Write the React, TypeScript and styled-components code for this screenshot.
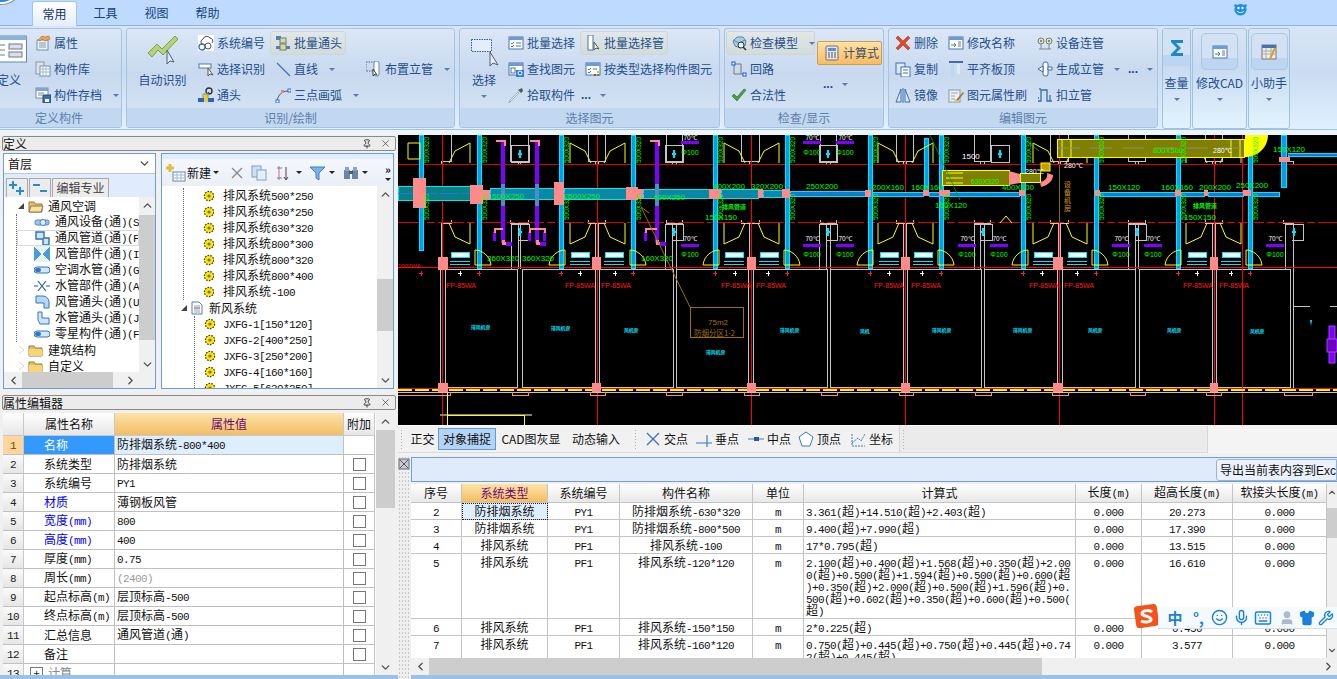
import React from "react";
import styled, { createGlobalStyle } from "styled-components";
import { Smile, Mic, Keyboard, Shirt, Wrench, User, Pin, X, ChevronUp, ChevronDown, ChevronLeft, ChevronRight } from "lucide-react";

const Global = createGlobalStyle`
  html, body { margin: 0; padding: 0; background: #f0f0f0; overflow: hidden; }
  * { box-sizing: border-box; }
  body { font-family: "Noto Sans CJK SC", "Liberation Sans", sans-serif; font-size: 12px; }
`;

const Page = styled.div`
  position: relative; width: 1337px; height: 679px; overflow: hidden;
  display: flex; flex-direction: column; background: #f0f0f0; line-height: 1;
`;

/* ---------- title bar and ribbon ---------- */
const TitleBar = styled.div`
  position: relative; height: 26px; flex: none; display: flex; align-items: flex-end; padding-left: 29px;
  background: #bedafe; border-bottom: 1px solid #8fb3e2;
`;
const Orb = styled.div`
  position: absolute; left: -20px; top: -36px; width: 42px; height: 40px; border-radius: 50%;
  background: #2f86d8; border: 2px solid #ffffff; box-shadow: 0 0 0 1px #7d97b8;
`;
const Tab = styled.div<{ $on?: boolean }>`
  width: 51px; height: 25px; display: flex; align-items: center; justify-content: center; color: #17417f; font-size: 12px;
  ${p => p.$on && `margin: 0 3px; width: 45px; border: 1px solid #a5c4e8; border-bottom: none; border-radius: 3px 3px 0 0;
    background: linear-gradient(#ffffff, #e3eefb); position: relative; top: 1px; color:#15325f;`}
`;
const TabSpacer = styled.div`flex: 1;`;
const Mascot = styled.div`margin: 0 89px 8px 0; width: 15px; height: 16px;`;

const Ribbon = styled.div`
  height: 104px; flex: none; display: flex; gap: 4px; padding-top: 2px; overflow: hidden;
  background: linear-gradient(#d8e5f6, #cadcf2 45%, #dff0ff);
  border-bottom: 1px solid #9cc2e6;
`;
const Group = styled.div<{ $w: number; $first?: boolean }>`
  width: ${p => p.$w}px; flex: none; height: 100px; display: flex; flex-direction: column;
  border: 1px solid #a8c3e0; border-radius: 3px; overflow: hidden;
  ${p => p.$first && `margin-left: -4px;`}
  background: linear-gradient(#dbe7f7, #c8d9ef 45%, #d8e6f6);
`;
const GroupBody = styled.div`height: 79px; flex: none; display: flex; padding-top: 1px;`;
const GroupFoot = styled.div`
  flex: 1; display: flex; align-items: center; justify-content: center; color: #5c7fac; background: #c2d7f0;
`;
const Col = styled.div<{ $w: number; $ml?: number; $pt?: number }>`
  width: ${p => p.$w}px; flex: none; display: flex; flex-direction: column;
  margin-left: ${p => p.$ml ?? 0}px; padding-top: ${p => p.$pt ?? 0}px;
`;
const BigBtn = styled.div<{ $w: number; $ml?: number }>`
  width: ${p => p.$w}px; flex: none; margin-left: ${p => p.$ml ?? 0}px; display: flex; flex-direction: column; align-items: center;
  color: #244f8c; white-space: nowrap;
`;
const BigIcon = styled.div<{ $h: number }>`height: ${p => p.$h}px; display: flex; align-items: center; justify-content: center;`;
const BigLabel = styled.div<{ $mt: number; $mb?: number }>`margin-top: ${p => p.$mt}px; margin-bottom: ${p => p.$mb ?? 0}px;`;
const Item = styled.div<{ $hot?: boolean; $gap?: number }>`
  height: 24px; margin: 1px 0; display: flex; align-items: center; gap: ${p => p.$gap ?? 3}px; color: #244f8c; white-space: nowrap;
  ${p => p.$hot && `margin-left: -5px; padding-left: 4px; border-radius: 3px; border: 1px solid #cdd5d8;
    background: linear-gradient(#e2e7e8, #d3dcd9);`}
`;
const Calc = styled.div`
  width: 65px; height: 24px; display: flex; align-items: center; gap: 3px; padding-left: 6px; color: #3a4f6e;
  border: 1px solid #c79f55; border-radius: 2px; background: linear-gradient(#fde3a4, #fbbb62);
`;
const Caret = styled.span<{ $ml?: number; $block?: boolean }>`
  display: inline-block; width: 0; height: 0; margin-left: ${p => p.$ml ?? 6}px;
  border-top: 3px solid #5b7dab; border-left: 3px solid transparent; border-right: 3px solid transparent;
  ${p => p.$block && `margin: 0;`}
`;
const Dots = styled.span`color: #244f8c; font-family: "Liberation Sans", sans-serif; font-weight: bold; letter-spacing: 0;`;
const Mini = styled.div<{ $w: number; $ml?: number }>`
  width: ${p => p.$w}px; flex: none; height: 101px; display: flex; flex-direction: column; align-items: center;
  margin-left: ${p => p.$ml ?? 0}px;
  border: 1px solid #9cc5dc; border-radius: 3px; color: #244f8c; white-space: nowrap;
  background: linear-gradient(#d7e4f5, #c9dbf1 40%, #e2f3ff);
`;
const MiniBox = styled.div<{ $w: number; $flat?: boolean }>`
  width: ${p => p.$w}px; height: 37px; margin-top: ${p => (p.$flat ? 0 : 4)}px; flex: none; display: flex; align-items: center; justify-content: center;
  border-radius: ${p => (p.$flat ? 0 : 5)}px; ${p => !p.$flat && `border: 1px solid #aac7e3;`}
  background: linear-gradient(#d2e1f4 70%, #bdd5f0 70%);
`;
const MiniLabel = styled.div<{ $mt: number }>`margin-top: ${p => p.$mt}px; height: 14px; margin-bottom: 7px; font-size: 12px;`;

/* ---------- body ---------- */
const Strip = styled.div`height: 5px; flex: none; background: #eef4fb;`;
const Main = styled.div`flex: 1; display: flex; min-height: 0;`;
const LeftCol = styled.div`width: 398px; flex: none; display: flex; flex-direction: column; background: #f0f0f0;`;
const RightCol = styled.div`flex: 1; min-width: 0; display: flex; flex-direction: column;`;

const DockTitle = styled.div<{ $mt: number }>`
  height: 15px; margin: ${p => p.$mt}px 2px 0 2px; flex: none; display: flex; align-items: center; padding: 0 4px 0 0;
  background: #ececec; border: 1px solid #8a8a8a; border-radius: 2px; color: #111; font-size: 12px;
`;
const DockName = styled.span`flex: 1;`;
const DockIcons = styled.span`display: flex; gap: 8px; align-items: center; color: #333;`;

const Panes = styled.div`height: 236px; margin: 2px 3px 0 3px; flex: none; display: flex; gap: 5px;`;
const Pane = styled.div<{ $w: number }>`
  width: ${p => p.$w}px; flex: none; display: flex; flex-direction: column; border: 1px solid #6b9fd3; background: #e0ecfd;
`;
const Combo = styled.div`
  height: 20px; margin: 0; flex: none; display: flex; align-items: center; justify-content: space-between; padding: 0 4px;
  background: #fff; border-bottom: 1px solid #b8c8dc; color: #111;
`;
const AddBar = styled.div`height: 23px; flex: none; display: flex; align-items: flex-end; gap: 1px; padding-left: 2px;`;
const AddBtn = styled.div<{ $w: number }>`
  width: ${p => p.$w}px; height: 19px; display: flex; align-items: center; justify-content: center;
  background: #ececec; border: 1px solid #aaa; border-bottom: none; color: #444;
`;
const TreeWrap = styled.div`flex: 1; min-height: 0; display: flex; background: #fff;`;
const TreeBody = styled.div<{ $pt: number }>`flex: 1; min-width: 0; overflow: hidden; position: relative; padding-top: ${p => p.$pt}px;`;
const TreeRow = styled.div<{ $pl: number; $gap?: number; $sel?: boolean }>`
  height: 16px; display: flex; align-items: center; gap: ${p => p.$gap ?? 5}px; padding-left: ${p => p.$pl}px;
  white-space: nowrap; color: #111; font-size: 12px;
  ${p => p.$sel && `outline: 1px solid #dadada; outline-offset: -1px;`}
`;
const Branch = styled.div<{ $ml: number }>`margin-left: ${p => p.$ml}px; border-left: 1px dotted #666;`;
const TriOpen = styled.span`
  width: 0; height: 0; flex: none; border-bottom: 6px solid #444; border-left: 6px solid transparent;
`;
const TriClosed = styled.span`
  width: 0; height: 0; flex: none; border-top: 4px solid transparent; border-bottom: 4px solid transparent; border-left: 5px solid #fff;
  filter: drop-shadow(0 0 0.6px #555);
`;
const ToolStrip = styled.div`
  height: 27px; margin-top: 5px; flex: none; display: flex; align-items: center; padding-left: 4px; color: #111;
  background: linear-gradient(#f4f7fc, #ebeff6);
`;
const ToolBtn = styled.div<{ $w: number; $ml?: number }>`width: ${p => p.$w}px; margin-left: ${p => p.$ml ?? 0}px; flex: none; display: flex; align-items: center; gap: 2px;`;
const ToolCaret = styled.span`
  width: 0; height: 0; border-top: 3px solid #222; border-left: 3px solid transparent; border-right: 3px solid transparent;
`;
const More = styled.div`margin-left: auto; margin-right: 2px; font-size: 11px; font-weight: bold; display: flex; flex-direction: column; align-items: center; gap: 3px;`;
const DocName = styled.span`margin-left: 2px;`;

const Lat = styled.span`font-family: "Liberation Mono", monospace; font-size: 11px; letter-spacing: -0.6px;`;
const Mixed = ({ t }: { t: string }) => (
  <>{t.split(/([\x00-\x7f]+)/).map((p, i) => (/^[\x00-\x7f]+$/.test(p) ? <Lat key={i}>{p}</Lat> : p))}</>
);

/* ---------- scrollbars ---------- */
const VBar = styled.div<{ $w: number }>`
  width: ${p => p.$w}px; flex: none; display: flex; flex-direction: column; align-items: center; background: #f0f0f0; color: #555;
`;
const VSpace = styled.div<{ $h?: number }>`flex: ${p => (p.$h === undefined ? 1 : "none")}; height: ${p => p.$h ?? 0}px;`;
const VThumb = styled.div<{ $h: number }>`width: 100%; height: ${p => p.$h}px; flex: none; background: #cdcdcd;`;
const ArrowCell = styled.div`height: 16px; width: 100%; flex: none; display: flex; align-items: center; justify-content: center;`;
const HBar = styled.div<{ $h: number }>`
  height: ${p => p.$h}px; flex: none; display: flex; align-items: center; background: #f0f0f0; color: #555;
`;
const HThumb = styled.div<{ $w: number }>`width: ${p => p.$w}px; height: 100%; flex: none; background: #cdcdcd;`;
const HArrow = styled.div`width: 18px; height: 100%; flex: none; display: flex; align-items: center; justify-content: center;`;
const HCorner = styled.div`width: 16px; height: 100%; flex: none;`;
const Grow = styled.div`flex: 1;`;

/* ---------- property table ---------- */
const PropWrap = styled.div`flex: 1; min-height: 0; margin: 3px 3px 0 3px; display: flex; overflow: hidden; background: #fff;`;
const PropClip = styled.div`flex: 1; min-width: 0; overflow: hidden;`;
const PropTable = styled.table`border-collapse: separate; border-spacing: 0; table-layout: fixed; width: 372px;`;
const PH = styled.th<{ $hot?: boolean; $w: number }>`
  width: ${p => p.$w}px; height: 23px; padding: 0; font-weight: normal; font-size: 12px; text-align: center;
  border-right: 1px solid #c8c8c8; border-bottom: 1px solid #c8c8c8; color: #111;
  background: ${p => (p.$hot ? "linear-gradient(#fde3a8, #f3bd64)" : "linear-gradient(#ffffff, #e6e6e6)")};
  ${p => p.$hot && `color: #6b0a78;`}
`;
const Num = styled.td<{ $on?: boolean }>`
  height: 19px; padding: 0; text-align: center; border-right: 1px solid #c8c8c8; border-bottom: 1px solid #c0c0c0;
  background: ${p => (p.$on ? "#fcd69c" : "linear-gradient(#fafafa, #e6e6e6)")}; color: ${p => (p.$on ? "#8a3a00" : "#222")};
`;
const PName = styled.td<{ $blue?: boolean; $on?: boolean; $gray?: boolean }>`
  height: 19px; padding: 0 0 0 20px; white-space: nowrap; overflow: hidden; border-right: 1px solid #c0c0c0; border-bottom: 1px solid #c0c0c0;
  color: ${p => (p.$on ? "#fff" : p.$blue ? "#0000ff" : p.$gray ? "#888" : "#111")};
  background: ${p => (p.$on ? "#3399ff" : "#fff")};
`;
const PVal = styled.td<{ $on?: boolean; $gray?: boolean }>`
  height: 19px; padding: 0 0 0 2px; white-space: nowrap; overflow: hidden; border-right: 1px solid #c0c0c0; border-bottom: 1px solid #c0c0c0;
  color: ${p => (p.$gray ? "#999" : "#111")}; background: ${p => (p.$on ? "#ddeeff" : "#fff")};
`;
const PChk = styled.td`
  height: 19px; padding: 0; border-right: 1px solid #c0c0c0; border-bottom: 1px solid #c0c0c0; background: #fff; text-align: center;
`;
const Check = styled.span`display: inline-block; width: 13px; height: 13px; border: 1px solid #777; vertical-align: middle; background: #fff;`;
const PlusBox = styled.span`
  display: inline-flex; width: 13px; height: 12px; margin: 0 5px 0 -14px; border: 1px solid #777; align-items: center; justify-content: center; font-size: 11px; color: #222;
`;
const Foot = styled.div`height: 4px; flex: none; background: #9cc0e8;`;

/* ---------- canvas and snap bar ---------- */
const Canvas = styled.svg`display: block; width: 939px; height: 290px; flex: none; background: #000;`;
const CadT = styled.text`font-family: "Liberation Sans", sans-serif;`;
const CadH = styled.text<{ $thin?: boolean }>`font-family: "Noto Sans CJK SC", sans-serif; font-weight: ${p => (p.$thin ? 400 : 700)};`;
const SnapBar = styled.div`height: 28px; flex: none; display: flex; align-items: stretch; background: #f4f4f4;`;
const SnapSec = styled.div<{ $w: number; $dark?: boolean }>`
  width: ${p => p.$w}px; flex: none; display: flex; align-items: center; background: ${p => (p.$dark ? "#ebebeb" : "#f1f1f1")};
  border-bottom: 1px solid #dcdcdc; border-right: 1px solid #d6d6d6; border-top: 1px solid #fafafa;
`;
const GripV = styled.div<{ $mr: number; $ml?: number }>`
  width: 3px; height: 20px; flex: none; margin: 0 ${p => p.$mr}px 0 ${p => p.$ml ?? 2}px;
  background-image: radial-gradient(#b0b0b0 0.8px, transparent 0.9px); background-size: 3px 3px;
`;
const SnapBtn = styled.div<{ $w: number; $on?: boolean }>`
  width: ${p => p.$w}px; height: 22px; flex: none; display: flex; align-items: center; justify-content: center; color: #111; white-space: nowrap;
  ${p => p.$on && `margin-left: 1px; background: #b3d4f5; border: 1px solid #5b9cdc;`}
`;
const SnapIcon = styled.div<{ $w: number }>`width: ${p => p.$w}px; flex: none; display: flex; align-items: center; gap: 3px; color: #111; white-space: nowrap;`;

/* ---------- bottom table ---------- */
const Bottom = styled.div`flex: 1; min-height: 0; margin-top: 4px; display: flex;`;
const BottomGrip = styled.div`
  width: 13px; flex: none; padding-top: 1px; background-color: #efefef;
  background-image: radial-gradient(#c8c8c8 0.9px, transparent 1px); background-size: 3px 4px; background-position: 3px 18px;
`;
const BottomMain = styled.div`flex: 1; min-width: 0; display: flex; flex-direction: column;`;
const BlueBar = styled.div`
  height: 25px; flex: none; display: flex; justify-content: flex-end; overflow: hidden;
  background: #dfeafb; border: 1px solid #6f9fd8; border-width: 1px 0 1px 1px;
`;
const ExportBtn = styled.div`
  width: 121px; flex: none; height: 22px; margin-top: 1px; padding-left: 3px; display: flex; align-items: center; white-space: nowrap; overflow: hidden;
  background: #eaf1fc; border: 1px solid #93b5dd; border-radius: 3px 0 0 3px; color: #111;
`;
const ExportLatin = styled.span`font-family: "Liberation Sans", sans-serif;`;
const GridZone = styled.div`height: 174px; margin-top: 2px; flex: none; display: flex;`;
const GridClip = styled.div`width: 916px; flex: none; overflow: hidden; background: #fff;`;
const Grid = styled.table`border-collapse: separate; border-spacing: 0; table-layout: fixed; width: 916px;`;
const GH = styled.th<{ $hot?: boolean; $w: number }>`
  width: ${p => p.$w}px; height: 19px; padding: 0; font-weight: normal; font-size: 12px; text-align: center; white-space: nowrap;
  line-height: 12px;
  border-right: 1px solid #c4c4c4; border-bottom: 1px solid #c4c4c4; color: ${p => (p.$hot ? "#6b0a78" : "#111")};
  background: ${p => (p.$hot ? "linear-gradient(#fde3a8, #f3bd64)" : "linear-gradient(#ffffff, #e8e8e8)")};
`;
const GD = styled.td<{ $left?: boolean; $sel?: boolean }>`
  padding: 2px ${p => (p.$left ? "0 0 2px" : "0 0")}; vertical-align: top; white-space: nowrap; overflow: hidden;
  border-right: 1px solid #c4c4c4; border-bottom: 1px solid #c4c4c4; color: #111; line-height: 12px;
  text-align: ${p => (p.$left ? "left" : "center")};
  ${p => p.$sel && `background: #ddeeff; outline: 1px dotted #222; outline-offset: -1px;`}
`;
const CellBox = styled.div<{ $h: number }>`height: ${p => p.$h - 3}px; overflow: hidden;`;
const Line = styled.div`height: 12px;`;
const Sogou = styled.div`position: absolute; left: 1134px; top: 603px; width: 203px; height: 26px; display: flex; align-items: center;`;
const SogouBar = styled.div`
  position: absolute; left: 24px; top: 4px; right: 0; height: 22px; display: flex; align-items: center; gap: 0; padding-left: 2px;
  background: rgba(245, 250, 255, 0.96); border-bottom: 1px solid #d5e0ea; color: #1a80d8;
`;
const SogouChar = styled.span<{ $w: number }>`width: ${p => p.$w}px; flex: none; text-align: center; font-weight: bold; font-size: 15px;`;
const SogouIcon = styled.span<{ $w: number; $muted?: boolean }>`width: ${p => p.$w}px; flex: none; display: flex; justify-content: center; color: ${p => (p.$muted ? "#a9bccd" : "#1a80d8")};`;

/* ---------- icons ---------- */
const S = ({ children, w = 16, h = 16 }: { children: React.ReactNode; w?: number; h?: number }) => (
  <svg width={w} height={h} viewBox={`0 0 ${w} ${h}`} style={{ flex: "none", display: "block" }}>{children}</svg>
);
const win = (
  <>
    <rect x="1" y="2" width="14" height="12" fill="#fff" stroke="#4a74a8" />
    <rect x="1" y="2" width="14" height="3" fill="#6f9bd0" />
  </>
);
const icons: Record<string, React.ReactNode> = {
  attr: <><rect x="2" y="5" width="11" height="10" fill="#eef3f8" stroke="#6e8fb5" /><path d="M4 8h7M4 10h7M4 12h7" stroke="#7f97b5" /><path d="M3 5l4-4 3 1 4-1 1 3-5 2-3-2-2 2z" fill="#e8a64e" stroke="#a86c2a" strokeWidth=".6" /></>,
  lib: <><rect x="1" y="1" width="8" height="12" fill="#dfe3e8" stroke="#8a99aa" /><rect x="5" y="5" width="10" height="10" fill="#fff" stroke="#6e8fb5" /><path d="M5 8h10M5 11h10M8 5v10M11 5v10" stroke="#9fb8d5" /></>,
  store: <><rect x="1" y="1" width="12" height="10" fill="#fff" stroke="#7d8a99" /><rect x="1" y="1" width="12" height="3" fill="#7fa5d2" /><path d="M3 6h6M3 8h4" stroke="#7d8a99" /><rect x="8" y="8" width="8" height="8" fill="#3c6fb0" stroke="#1f4a85" /><rect x="10" y="12" width="4" height="3" fill="#fff" /></>,
  sysno: <><rect x="0" y="0" width="16" height="16" fill="#fff" /><path d="M4 9a3 3 0 0 1 1-5 4 4 0 0 1 7-1 3 3 0 0 1 2 5" fill="none" stroke="#445" /><circle cx="4" cy="12" r="3" fill="none" stroke="#3a6ea5" strokeWidth="1.3" /><circle cx="10" cy="11" r="3" fill="none" stroke="#555" /></>,
  tee: <><rect x="1" y="1" width="5" height="4" fill="#4f81bd" /><rect x="5" y="3" width="6" height="5" fill="#f4d36a" stroke="#4f81bd" /><rect x="5" y="9" width="6" height="6" fill="#f4d36a" stroke="#4f81bd" /><rect x="1" y="11" width="4" height="3" fill="#4f81bd" /><rect x="11" y="11" width="4" height="3" fill="#4f81bd" /></>,
  pick: <><rect x="1" y="3" width="12" height="4" fill="#fff" stroke="#4c78ad" /><path d="M10 7v8l2-2 3 1-5-7" fill="#fff" stroke="#555" /></>,
  line: <path d="M2 2l13 13" stroke="#3c73b4" strokeWidth="1.3" />,
  riser: <><rect x="0" y="1" width="9" height="9" fill="none" stroke="#4270a8" strokeDasharray="1.5 1" /><rect x="8" y="0" width="5" height="15" rx="2" fill="#fff" stroke="#6a88a8" /><path d="M7 8v7l2-2 2 1z" fill="#fff" stroke="#444" /></>,
  elbow: <><circle cx="11" cy="4" r="3" fill="none" stroke="#333" strokeWidth="1.4" /><path d="M8 8l3-3" stroke="#333" /><rect x="5" y="7" width="5" height="5" fill="#f2c83a" stroke="#7a6" /><rect x="0" y="11" width="16" height="4" fill="#2c62c0" /><rect x="6" y="11" width="4" height="4" fill="#f2c83a" /></>,
  arc: <><path d="M2 14C3 8 7 4 13 4" fill="none" stroke="#555" /><rect x="1" y="13" width="3" height="3" fill="#fff" stroke="#2b6fc0" /><rect x="13" y="2" width="3" height="3" fill="#fff" stroke="#2b6fc0" /><rect x="6" y="3" width="3" height="3" fill="#d88" /></>,
  batchSel: <>{win}<path d="M3 8l1 1 2-2M3 11l1 1 2-2M8 8h5M8 11h5" stroke="#4a74a8" fill="none" /></>,
  pipeSel: <><rect x="3" y="0" width="5" height="15" fill="#fff" stroke="#4a74a8" /><path d="M9 7v8l2-2 3 1z" fill="#fff" stroke="#555" /></>,
  find: <>{win}<rect x="3" y="7" width="4" height="5" fill="none" stroke="#4a74a8" /><rect x="8" y="9" width="8" height="7" fill="#2f7fd6" /><circle cx="12" cy="12" r="2" fill="none" stroke="#fff" /></>,
  typeSel: <>{win}<path d="M3 8l1 1 2-2M3 11l1 1 2-2M8 8h4" stroke="#4a74a8" fill="none" /><rect x="9" y="13" width="2" height="2" fill="#c33" /><rect x="12" y="13" width="2" height="2" fill="#3a3" /><rect x="12" y="10" width="2" height="2" fill="#cc3" /></>,
  drop: <><path d="M11 6L3 14l-2 2 1-3 8-8z" fill="#dff0fa" stroke="#98b4c8" /><path d="M10 3l3 3 2-2-1-3z" fill="#555" /></>,
  check: <><path d="M6 2l6 0 3 4-1 5-5 2-5-2-2-5z" fill="#a9cce8" stroke="#5a84ad" /><path d="M2 5l6 3 6-3M8 8v5" stroke="#5a84ad" fill="none" /><circle cx="10" cy="10" r="3" fill="#e8f3fb" stroke="#333" /><path d="M12 12l3 3" stroke="#333" strokeWidth="1.6" /></>,
  loop: <><path d="M3 3h7v10h3" fill="none" stroke="#777" /><path d="M3 3v10h7" fill="none" stroke="#777" /><rect x="1" y="1" width="3" height="3" fill="#fff" stroke="#1a55e0" /><rect x="12" y="12" width="3" height="3" fill="#fff" stroke="#1a55e0" /></>,
  ok: <path d="M1 9l5 5 9-11-2-1-7 8-3-3z" fill="#4b9e3c" stroke="#2f6f28" strokeWidth=".6" />,
  calc: <><rect x="2" y="1" width="12" height="14" rx="1" fill="#e6e6ea" stroke="#6d6f77" /><rect x="4" y="3" width="8" height="3" fill="#5f8fd0" /><path d="M4 8h2M7 8h2M10 8h2M4 10h2M7 10h2M10 10h2M4 12h2M7 12h2M10 12h2" stroke="#555" strokeWidth="1.2" /></>,
  del: <path d="M1 3l2-2 5 5 5-5 2 2-5 5 5 5-2 2-5-5-5 5-2-2 5-5z" fill="#e2472b" stroke="#a82a17" strokeWidth=".5" />,
  rename: <>{win}<path d="M3 10h5M6 8l2 2-2 2" stroke="#3a7ac0" fill="none" /><path d="M10 7h3M10 9h3M10 11h3" stroke="#777" /></>,
  equip: <><circle cx="4" cy="6" r="3" fill="#f3df9c" stroke="#6c7f92" /><circle cx="12" cy="6" r="3" fill="#f3df9c" stroke="#6c7f92" /><path d="M3 5l2 2M5 5L3 7M11 5l2 2M13 5l-2 2M4 9v5M12 9v5M2 14h12" stroke="#7b8a99" fill="none" /></>,
  copy: <><rect x="1" y="2" width="9" height="11" fill="#dbe9f8" stroke="#3c6fae" /><rect x="6" y="6" width="9" height="10" fill="#fff" stroke="#3c6fae" /><path d="M8 9h5M8 12h5" stroke="#3c6fae" /></>,
  flush: <><rect x="1" y="0" width="14" height="2" fill="#456c9c" /><rect x="3" y="3" width="3" height="13" fill="#bcd7ef" /><rect x="9" y="3" width="3" height="10" fill="#dce9f6" /></>,
  gen: <><rect x="6" y="1" width="5" height="14" rx="2" fill="#fff" stroke="#3a6ea5" /><path d="M6 5L1 8l5 3zM11 6h4v3h-4z" fill="#fff" stroke="#3a6ea5" /></>,
  mirror: <path d="M1 15L6 2v13zM15 15L10 2v13zM8 1v15" fill="#dbe9f8" stroke="#3c6fae" />,
  brush: <><rect x="1" y="3" width="11" height="12" fill="#eef2f6" stroke="#8a97a6" /><path d="M3 6h7M3 9h4M3 12h4" stroke="#98a6b5" /><path d="M8 13l7-8 1 1-6 8z" fill="#a77b2e" /><path d="M7 12l3 3-4 1z" fill="#e0c070" /></>,
  deduct: <path d="M1 14h3V3h6v11h5M1 11h1M3 3V1M13 14V8" fill="none" stroke="#3a6ea5" strokeWidth="1.3" />,
  modCad: <>{win}<path d="M3 10h5M6 8l2 2-2 2" stroke="#3a7ac0" fill="none" /><path d="M10 7h3M10 9h3M10 11h3" stroke="#777" /></>,
  helper: <><rect x="1" y="1" width="14" height="14" fill="#eee" stroke="#777" /><rect x="1" y="1" width="14" height="3" fill="#3f74b5" /><path d="M1 7h14M1 10h14M5 4v11M10 4v11" stroke="#aaa" /><path d="M14 4l-5 11" stroke="#d9a21b" strokeWidth="2" /></>
};
const I = ({ n }: { n: string }) => <S>{icons[n]}</S>;

const Gear = () => (
  <S w={14} h={14}>
    <circle cx="7" cy="7" r="4.6" fill="#f8f000" stroke="#333" strokeWidth="1.2" strokeDasharray="1.6 1.2" />
    <circle cx="7" cy="7" r="3.2" fill="#ffe400" />
    <circle cx="7" cy="7" r="1.6" fill="#8a6a10" />
  </S>
);
const Folder = ({ open }: { open?: boolean }) => (
  <S w={16} h={14}>
    <path d="M1 3h5l1 2h7v8H1z" fill="#f2c04a" stroke="#8a7a50" />
    {open ? <path d="M3 7h12l-2 6H1z" fill="#f8e3a0" stroke="#8a7a50" /> : <rect x="1" y="6" width="13" height="7" fill="#f7d576" />}
  </S>
);
const Doc = () => (
  <S w={12} h={14}>
    <path d="M1 1h7l3 3v9H1z" fill="#fff" stroke="#5a7ea8" />
    <path d="M3 5h6M3 7h6M3 9h6M3 11h6" stroke="#8aa6c5" />
    <path d="M3 7h6" stroke="#d06a5a" />
  </S>
);
const treeIcon: Record<string, React.ReactNode> = {
  a: <><rect x="1" y="6" width="14" height="5" rx="2" fill="#9fc6ea" stroke="#4c86c5" /><circle cx="9" cy="8.5" r="3" fill="#dbeeff" stroke="#4c86c5" /></>,
  b: <path d="M2 2h8v6h5v7H9V9H2z" fill="#cfe3f6" stroke="#2f6fb5" strokeWidth="1.4" />,
  c: <><rect x="0" y="0" width="16" height="16" fill="#4a9bdc" /><path d="M0 0l8 8 8-8M0 16l8-8 8 8" fill="#e5f2fc" stroke="#fff" /></>,
  d: <><rect x="0" y="5" width="16" height="6" rx="3" fill="#d2e7f8" stroke="#2f77c0" /><rect x="1" y="6" width="6" height="4" rx="2" fill="#2f77c0" /></>,
  e: <><path d="M4 3l8 10M12 3L4 13M0 8h4M12 8h4" stroke="#1e5ea8" strokeWidth="1.2" /></>,
  f: <path d="M2 2h7a6 6 0 0 1 6 6v6h-5V9H2z" fill="#b7d8f5" stroke="#2f77c0" />,
  g: <path d="M4 2h4v6h7v6H6L4 10z" fill="#cfe6fa" stroke="#2f77c0" />
};
const defTree: [string, string, boolean?][] = [
  ["a", "通风设备(通)(S"], ["b", "通风管道(通)(F", true], ["c", "风管部件(通)(I"], ["d", "空调水管(通)(G"],
  ["e", "水管部件(通)(A"], ["f", "风管通头(通)(U"], ["g", "水管通头(通)(J"], ["d", "零星构件(通)(F"]
];
const smokeRows = ["排风系统500*250","排风系统630*250","排风系统630*320","排风系统800*300","排风系统800*320","排风系统800*400","排风系统-100"];
const freshRows = ["JXFG-1[150*120]","JXFG-2[400*250]","JXFG-3[250*200]","JXFG-4[160*160]","JXFG-5[630*250]"];

const propRows: { n: string; v: string; blue?: boolean; gray?: boolean }[] = [
  { n: "名称", v: "防排烟系统-800*400" }, { n: "系统类型", v: "防排烟系统" }, { n: "系统编号", v: "PY1" },
  { n: "材质", v: "薄钢板风管", blue: true }, { n: "宽度(mm)", v: "800", blue: true }, { n: "高度(mm)", v: "400", blue: true },
  { n: "厚度(mm)", v: "0.75" }, { n: "周长(mm)", v: "(2400)", gray: true }, { n: "起点标高(m)", v: "层顶标高-500" },
  { n: "终点标高(m)", v: "层顶标高-500" }, { n: "汇总信息", v: "通风管道(通)" }, { n: "备注", v: "" }
];

const gridCols: [string, number, boolean?][] = [
  ["序号", 51], ["系统类型", 86, true], ["系统编号", 72], ["构件名称", 133], ["单位", 51],
  ["计算式", 272], ["长度(m)", 66], ["超高长度(m)", 91], ["软接头长度(m)", 94]
];
const gridRows: { h: number; c: string[]; f: string[] }[] = [
  { h: 17, c: ["2","防排烟系统","PY1","防排烟系统-630*320","m","0.000","20.273","0.000"], f: ["3.361(超)+14.510(超)+2.403(超)"] },
  { h: 17, c: ["3","防排烟系统","PY1","防排烟系统-800*500","m","0.000","17.390","0.000"], f: ["9.400(超)+7.990(超)"] },
  { h: 17, c: ["4","排风系统","PF1","排风系统-100","m","0.000","13.515","0.000"], f: ["17*0.795(超)"] },
  { h: 65, c: ["5","排风系统","PF1","排风系统-120*120","m","0.000","16.610","0.000"], f: ["2.100(超)+0.400(超)+1.568(超)+0.350(超)+2.00","0(超)+0.500(超)+1.594(超)+0.500(超)+0.600(超",")+0.350(超)+2.000(超)+0.500(超)+1.596(超)+0.","500(超)+0.602(超)+0.350(超)+0.600(超)+0.500(","超)"] },
  { h: 17, c: ["6","排风系统","PF1","排风系统-150*150","m","0.000","0.450","0.000"], f: ["2*0.225(超)"] },
  { h: 30, c: ["7","排风系统","PF1","排风系统-160*120","m","0.000","3.577","0.000"], f: ["0.750(超)+0.445(超)+0.750(超)+0.445(超)+0.74","2(超)+0.445(超)"] }
];

/* ---------- CAD drawing ---------- */
const PINK = "#ff8a8a", CY = "#00e5ff", GR = "#00ff00", YL = "#ffff00", WALL = "#c4c4c4", PUR = "#8000ff";
const ductsV = [421, 479, 561, 633, 715, 787, 870, 941, 1023, 1096, 1178, 1250];
const rooms = [[445,517],[522,595],[599,673],[676,748],[753,827],[830,903],[907,981],[984,1057],[1062,1135],[1139,1212],[1216,1290]];
const doors: [number, "R" | "L"][] = [[470,"R"],[570,"L"],[625,"R"],[724,"L"],[779,"R"],[878,"L"],[933,"R"],[1033,"L"],[1087,"R"],[1186,"L"],[1241,"R"]];
const grilles = [451,571,605,725,760,880,914,1034,1068,1188,1222];
const fpX = [446,565,601,721,756,874,911,1029,1064,1183,1219];
const whiteDots = [460,580,615,735,768,889,922,1042,1077,1197,1231];
const redV = [442,597,751,905,1059,1214,1242];
const cols = [[438,448],[592,601],[747,756],[901,910],[1053,1063],[1210,1218]];
const brackets = [[512,528],[590,605],[666,682],[744,759],[821,837],[899,913],[975,991],[1052,1068],[1130,1145],[1206,1221],[1284,1312]];
const shaftsLow = [520,674,828,983,1137,1294];
const shaftsHigh = [520,674,828,1000];
const purLow = [681,803,836,958,990,1112,1144,1266];
const purHigh = [681,803,836];
const roomLabels: [number, number, string][] = [[471,329,"排风机房"],[551,330,"排风机房"],[624,332,"风机房"],[706,354,"排风机房"],[780,332,"排风机房"],[860,333,"风机"],[932,332,"排风机房"],[1013,332,"排风机房"],[1088,332,"风机房"],[1167,332,"风机房"],[1250,333,"风机房"]];
const ductH: [number, number, number, number, string][] = [
  [398,470,186,200,"#0a8080"],[490,554,188,199,"#0a8a96"],[564,626,188,199,"#0a8a96"],[643,709,189,198,"#0a8a96"],[721,758,189,198,"#0a8a96"],
  [763,782,190,197,"#0a8a96"],[790,865,191,196,"#0a7fc0"],[868,923,192,196,"#0a7fc0"],[929,1019,192,196,"#0a7fc0"],[1100,1175,192,196,"#0a7fc0"],
  [1181,1204,192,196,"#0a7fc0"],[1208,1243,192,196,"#0a7fc0"],[1251,1279,192,196,"#0a7fc0"],[1288,1337,153,156,"#0a7fc0"]
];
const pinkH: [number, number, number, number][] = [
  [413,426,178,208],[470,483,185,204],[483,490,190,200],[554,564,182,205],[626,638,187,200],[637,643,189,199],[709,721,189,199],[758,763,189,198],
  [782,790,189,198],[865,871,190,197],[923,929,190,196],[939,950,190,196],[1019,1025,190,196],[1095,1100,190,196],[1175,1181,190,196],[1204,1208,190,196],[1243,1251,190,196]
];
const greenLabels: [number, number, string][] = [
  [508,199,"500X250"],[584,199,"500X250"],[669,200,"400X250"],[729,189,"400X200"],[767,189,"320X200"],[822,189,"250X200"],
  [888,190,"200X160"],[927,190,"160X160"],[1018,190,"400X400"],[1124,190,"150X120"],[1177,190,"160X160"],[1215,190,"200X200"],[1252,188,"250X200"],
  [951,208,"150X120"],[721,220,"150X150"],[1289,152,"150X120"],[503,261,"360X320"],[538,261,"360X320"],[657,261,"160X320"],[1200,220,"150X150"]
];

const Cad = () => (
  <Canvas viewBox="398 135 939 290">
    <g shapeRendering="crispEdges">
      {rooms.map(([a, b], i) => <rect key={i} x={a + 0.5} y={269.5} width={b - a} height={118} fill="none" stroke={WALL} />)}
      <path d="M440.5 269V388M1293.5 269V388M1293 306h17M1330 306h7" stroke={WALL} fill="none" />
      {rooms.map(([a, b], i) => (
        <path key={`u${i}`} fill="none" stroke={WALL}
          d={`M${a - 3.5} 269V223.5H${a + 6.5}V219.5M${b + 3.5} 269V223.5H${b - 6.5}V219.5M${a - 3.5} 164.5V161.5H${a + 6.5}V135M${b + 3.5} 164.5V161.5H${b - 6.5}V135`} />
      ))}
      {shaftsLow.map((x, i) => (
        <g key={i}>
          <path d={`M${x - 8.5} 269V224.5H${x + 9.5}V240.5H${x - 2}`} fill="none" stroke={WALL} />
          <path d={`M${x} 228v8M${x - 2} 232h4`} stroke={CY} strokeWidth="2" />
        </g>
      ))}
      {shaftsHigh.map((x, i) => (
        <g key={i}>
          <rect x={x - 8.5} y={145.5} width={18} height={17} fill="none" stroke={WALL} />
          <path d={`M${x} 150v8M${x - 2} 154h4`} stroke={CY} strokeWidth="2" />
        </g>
      ))}
      {redV.map(x => <line key={x} x1={x + 0.5} x2={x + 0.5} y1={135} y2={425} stroke="#ff0000" />)}
      <line x1={398} x2={1337} y1={164.5} y2={164.5} stroke="#e00000" />
      <line x1={398} x2={1337} y1={222.5} y2={222.5} stroke="#e00000" strokeDasharray="26 3 8 3" />
      <line x1={398} x2={1337} y1={267.5} y2={267.5} stroke="#ff0000" />
      <line x1={1059.5} x2={1059.5} y1={165} y2={222} stroke="#807000" />
      <line x1={398} x2={1337} y1={388.5} y2={388.5} stroke="#ff0000" />
      <line x1={398} x2={1337} y1={390} y2={390} stroke={YL} strokeWidth="2" strokeDasharray="14 3" />
      <line x1={398} x2={1337} y1={392.5} y2={392.5} stroke={WALL} />
      <path d="M398 395.5H450V392" stroke={PINK} fill="none" strokeWidth="1" />
      {brackets.map(([a, b], i) => <path key={i} d={`M${a}.5 392V395.5H${b}.5V392`} stroke={PINK} fill="none" />)}
      {cols.map(([a, b], i) => (
        <g key={i}>
          <rect x={a} y={257} width={b - a} height={13} fill={PINK} />
          <rect x={a} y={383} width={b - a} height={9} fill={PINK} />
        </g>
      ))}
      <line x1={440} x2={532} y1={414.5} y2={414.5} stroke="#808080" strokeWidth="2" />
      <path d="M447.5 393V425M447.5 415.5H524.5V425" stroke={YL} fill="none" />

      {ductH.map(([a, b, t, o, f], i) => (
        <g key={i}>
          <rect x={a + 0.5} y={t + 0.5} width={b - a} height={o - t} fill={f} stroke={CY} />
          <line x1={a} x2={b} y1={(t + o) / 2} y2={(t + o) / 2} stroke="#1478ff" strokeDasharray="18 3" />
        </g>
      ))}
      {ductsV.map(x => (
        <rect key={x} x={x - 2} y={135} width={4} height={x === 421 ? 115 : 133} fill="#00a0e8" stroke={CY} />
      ))}
      <rect x={924} y={138} width={4} height={52} fill="#00a0e8" stroke={CY} />
      <rect x={1281} y={135} width={5} height={52} fill="#00a0e8" stroke={CY} />
      <rect x={1279} y={157} width={11} height={5} fill={PINK} />

      {[503, 537, 657].map(x => (
        <g key={x}>
          <rect x={x - 2} y={141} width={4} height={102} fill={PUR} />
          <rect x={x - 2} y={184} width={4} height={22} fill="#4a90c8" />
        </g>
      ))}
      {[[495,503],[530,537],[545,537],[646,657]].map(([a, b], i) => (
        <g key={i}>
          <rect x={a - 2} y={232} width={3} height={9} fill={PUR} />
          <path d={`M${a} 233V229H${b}`} stroke={PINK} strokeWidth="2" fill="none" />
        </g>
      ))}
      {[503, 537, 657].map(x => (
        <g key={`c${x}`}>
          <path d={`M${x - 7} 141H${x + 2}V146`} stroke={PINK} strokeWidth="2.5" fill="none" />
          <path d={`M${x} 240V243H${x + 4}`} stroke={PINK} strokeWidth="3" fill="none" />
          <rect x={x + 3} y={242} width={6} height={4} fill={PUR} />
        </g>
      ))}
      {pinkH.map(([a, b, t, o], i) => <rect key={i} x={a} y={t} width={b - a} height={o - t} fill={PINK} />)}

      {grilles.map(x => (
        <g key={x}>
          <rect x={x} y={252} width={18} height={5} fill="#fff" stroke={CY} />
          <path d={`M${x - 1} 261.5h20M${x - 1} 264.5h20`} stroke={CY} />
        </g>
      ))}
      {purLow.map(x => <rect key={x} x={x} y={244} width={18} height={3} fill={PUR} />)}
      {purHigh.map(x => <rect key={x} x={x} y={141} width={18} height={3} fill={PUR} />)}
      {whiteDots.map(x => <path key={x} d={`M${x - 2} 273.5h4M${x} 271v5`} stroke="#fff" />)}
      {ductsV.map(x => <path key={`r${x}`} d={`M${x - 2} 273.5h4M${x} 271v5`} stroke="#ff2020" />)}
    </g>

    {doors.map(([x, k], i) => {
      const s = k === "R" ? -1 : 1;
      return (
        <g key={i} fill="none" stroke={YL} strokeWidth="1">
          <path d={`M${x} 223V244L${x + s * 15} 237L${x + s * 21} 223`} />
          <path d={`M${x} 163V143L${x + s * 15} 151L${x + s * 21} 163`} />
          <path d={`M${x + s * -5} 265V250C${x + s * -12} 250 ${x + s * -20} 256 ${x + s * -21} 265Z`} />
        </g>
      );
    })}
    <path d="M408 143h12v16M408 143V159h12" fill="none" stroke={YL} />
    <path d="M1000 223l6-7 6 7" fill="none" stroke={YL} />
    <rect x="1057.5" y="139.5" width="187" height="18" fill="#808000" stroke={YL} />
    <path d="M1062 139v18M1071 139v18M1231 139v18M1240 139v18" stroke={YL} />
    <line x1="1058" x2="1244" y1="148" y2="148" stroke="#8a8a8a" strokeDasharray="22 10" />
    <path d="M1245 135h23c0 12-10 22-23 22z" fill={YL} />
    <rect x="942.5" y="170.5" width="67" height="15" fill="#808000" stroke={YL} />
    <path d="M946 173h17M946 178h17M946 183h17" stroke={YL} />
    <path d="M1009 171l11 3v9l-11 2z" fill={PINK} />
    <rect x="1020.5" y="173.5" width="20" height="9" fill="#808000" stroke={YL} />
    <path d="M1040 182c5-1 8-4 7-9l6 2c0 6-5 10-12 12z" fill={PINK} />
    <rect x="1041" y="163" width="9" height="8" fill="#c0a000" stroke={YL} />
    <path d="M930 135l30 65" stroke="#009933" strokeWidth=".8" fill="none" />
    <path d="M1019 135l20 16" stroke={CY} strokeWidth=".6" fill="none" />
    <path d="M641 207L690 307" stroke="#a07000" fill="none" />
    <path d="M641 207l8 6" stroke="#a07000" fill="none" />
    <rect x="690.5" y="307.5" width="53" height="30" fill="none" stroke="#a07000" />
    <CadT x="708" y="325" fontSize="8" fill="#a07000">75m2</CadT>
    <CadH $thin x="694" y="336" fontSize="7.5" fill="#a07000">防烟分区1-2</CadH>
    {fpX.map(x => <CadT key={x} x={x} y={288} fontSize="7" fill="#ff1a1a" textLength="30" lengthAdjust="spacingAndGlyphs">FP-85WA</CadT>)}
    <CadT x={398} y={268} fontSize="6" fill="#ff1a1a">1002WA</CadT>
    {roomLabels.map(([x, y, t], i) => <CadH key={i} x={x} y={y} fontSize="4.8" fill={CY}>{t}</CadH>)}
    {greenLabels.map(([x, y, t], i) => <CadT key={i} x={x} y={y} fontSize="8" fill={GR} textAnchor="middle">{t}</CadT>)}
    {ductsV.map(x => (
      <g key={x}>
        <CadT fontSize="6.5" fill={GR} transform={`translate(${x + 8} 220) rotate(-90)`}>500X320</CadT>
        <CadT fontSize="6.5" fill={GR} transform={`translate(${x + 8} 163) rotate(-90)`}>500X320</CadT>
      </g>
    ))}
    {purLow.map(x => (
      <g key={x}>
        <CadT x={x + 9} y={241} fontSize="6.5" fill="#fff" textAnchor="middle">70℃</CadT>
        <CadT x={x + 9} y={257} fontSize="7" fill={GR} textAnchor="middle">Φ100</CadT>
      </g>
    ))}
    {purHigh.map(x => (
      <g key={x}>
        <CadT x={x + 9} y={140} fontSize="6.5" fill="#fff" textAnchor="middle">70℃</CadT>
        <CadT x={x + 9} y={155} fontSize="7" fill={GR} textAnchor="middle">Φ100</CadT>
      </g>
    ))}
    <CadT x="962" y="159" fontSize="8" fill="#fff">1500</CadT>
    <CadT x="1153" y="153" fontSize="7.5" fill={GR}>800X500</CadT>
    <CadT x="1213" y="153" fontSize="7" fill="#fff">280℃</CadT>
    <CadT x="971" y="184" fontSize="7" fill={GR}>630X320</CadT>
    <CadT x="1025" y="174" fontSize="7" fill="#fff">280℃</CadT>
    <CadT x="1064" y="168" fontSize="7" fill="#fff">280℃</CadT>
    <CadH x="1064" y="187" fontSize="7" fill="#a07000">设</CadH>
    <CadH x="1064" y="195" fontSize="7" fill="#a07000">备</CadH>
    <CadH x="1064" y="203" fontSize="7" fill="#a07000">机</CadH>
    <CadH x="1064" y="211" fontSize="7" fill="#a07000">房</CadH>
    <CadH x="722" y="209" fontSize="6" fill={GR}>排风管道</CadH>
    <CadH x="1193" y="208" fontSize="6" fill={GR}>排风管道</CadH>
    <rect x="1329" y="326" width="6" height="37" fill={PUR} stroke="#a040ff" />
    <rect x="1327" y="339" width="10" height="13" fill="#7000c0" stroke="#a040ff" />
    <path d="M1310 320h2l-1 6z" fill={CY} />
  </Canvas>
);

const Scroll = {
  Up: () => <ArrowCell><ChevronUp size={13} strokeWidth={2.6} /></ArrowCell>,
  Down: () => <ArrowCell><ChevronDown size={13} strokeWidth={2.6} /></ArrowCell>,
  Left: () => <HArrow><ChevronLeft size={13} strokeWidth={2.6} /></HArrow>,
  Right: () => <HArrow><ChevronRight size={13} strokeWidth={2.6} /></HArrow>
};

const Head = ({ t, mt }: { t: string; mt: number }) => (
  <DockTitle $mt={mt}>
    <DockName>{t}</DockName>
    <DockIcons><Pin size={10} strokeWidth={2.2} /><X size={11} strokeWidth={1.4} /></DockIcons>
  </DockTitle>
);

export default function App() {
  return (
    <Page>
      <Global />
      <TitleBar>
        <Orb />
        <Tab $on>常用</Tab><Tab>工具</Tab><Tab>视图</Tab><Tab>帮助</Tab>
        <TabSpacer />
        <Mascot>
          <S w={15} h={16}>
            <path d="M2 3l2 1a7 7 0 0 1 7 0l2-1 1 2-1 1a6 6 0 1 1-11 0L1 5z" fill="#1c8fe8" />
            <circle cx="5.5" cy="7" r="1.2" fill="#fff" /><circle cx="9.5" cy="7" r="1.2" fill="#fff" />
            <path d="M4 10c1 2 6 2 7 0" stroke="#fff" fill="none" />
          </S>
        </Mascot>
      </TitleBar>

      <Ribbon>
        <Group $w={126} $first>
          <GroupBody>
            <BigBtn $w={44} $ml={-10}>
              <BigIcon $h={38}>
                <S w={36} h={28}>
                  <rect x="0.5" y="1" width="35" height="26" fill="#fff" stroke="#5f86b5" />
                  <rect x="0.5" y="1" width="35" height="4" fill="#8fb2dc" />
                  <path d="M5 10h9M5 15h9M5 20h9" stroke="#6a7a8a" />
                  <rect x="18" y="9" width="13" height="5" fill="#dde" stroke="#6a7a8a" />
                  <rect x="18" y="17" width="13" height="5" fill="#dde" stroke="#6a7a8a" />
                </S>
              </BigIcon>
              <BigLabel $mt={6}>定义</BigLabel>
            </BigBtn>
            <Col $w={84} $ml={4}>
              <Item><I n="attr" />属性</Item>
              <Item><I n="lib" />构件库</Item>
              <Item><I n="store" />构件存档<Caret $ml={8} /></Item>
            </Col>
          </GroupBody>
          <GroupFoot>定义构件</GroupFoot>
        </Group>

        <Group $w={329}>
          <GroupBody>
            <BigBtn $w={71}>
              <BigIcon $h={42}>
                <S w={34} h={34}>
                  <path d="M2 19L11 10l5 5L29 2l3 3L17 21l-5-5-6 7z" fill="#b5d279" stroke="#7e9e4c" />
                  <path d="M22 18v14l3-3 4 1z" fill="#dfe9f5" stroke="#4d5f7a" transform="translate(-1 -2)" />
                </S>
              </BigIcon>
              <BigLabel $mt={2}>自动识别</BigLabel>
            </BigBtn>
            <Col $w={77}>
              <Item><I n="sysno" />系统编号</Item>
              <Item><I n="pick" />选择识别</Item>
              <Item><I n="elbow" />通头</Item>
            </Col>
            <Col $w={91}>
              <Item $hot style={{ marginRight: 20 }}><I n="tee" />批量通头</Item>
              <Item><I n="line" />直线<Caret $ml={8} /></Item>
              <Item><I n="arc" />三点画弧<Caret $ml={8} /></Item>
            </Col>
            <Col $w={88} $pt={26}>
              <Item $gap={3}><I n="riser" />布置立管<Caret $ml={8} /></Item>
            </Col>
          </GroupBody>
          <GroupFoot>识别/绘制</GroupFoot>
        </Group>

        <Group $w={261}>
          <GroupBody>
            <BigBtn $w={48}>
              <BigIcon $h={42}>
                <S w={32} h={34}>
                  <rect x="3.5" y="5.5" width="20" height="12" fill="#e4eefa" stroke="#2c5ea8" strokeDasharray="1.5 1" />
                  <path d="M22 19v14l3-3 5 2z" fill="#e8eef6" stroke="#4d5f7a" transform="translate(0 -1)" />
                </S>
              </BigIcon>
              <BigLabel $mt={2} $mb={9}>选择</BigLabel>
              <Caret $block />
            </BigBtn>
            <Col $w={77}>
              <Item><I n="batchSel" />批量选择</Item>
              <Item><I n="find" />查找图元</Item>
              <Item><I n="drop" />拾取构件</Item>
            </Col>
            <Col $w={132}>
              <Item $hot style={{ width: 88 }}><I n="pipeSel" />批量选择管</Item>
              <Item><I n="typeSel" />按类型选择构件图元</Item>
              <Item style={{ marginLeft: -4 }}><Dots>...</Dots><Caret $ml={6} /></Item>
            </Col>
          </GroupBody>
          <GroupFoot>选择图元</GroupFoot>
        </Group>

        <Group $w={160}>
          <GroupBody>
            <Col $w={86} $ml={6}>
              <Item $hot style={{ width: 89 }}><I n="check" />检查模型<Caret $ml={8} /></Item>
              <Item><I n="loop" />回路</Item>
              <Item><I n="ok" />合法性</Item>
            </Col>
            <Col $w={65} $pt={11}>
              <Calc><I n="calc" />计算式</Calc>
              <Item style={{ marginTop: 7, paddingLeft: 6 }}><Dots>...</Dots><Caret $ml={6} /></Item>
            </Col>
          </GroupBody>
          <GroupFoot>检查/显示</GroupFoot>
        </Group>

        <Group $w={270}>
          <GroupBody>
            <Col $w={53} $ml={6}>
              <Item><I n="del" />删除</Item>
              <Item><I n="copy" />复制</Item>
              <Item><I n="mirror" />镜像</Item>
            </Col>
            <Col $w={89}>
              <Item><I n="rename" />修改名称</Item>
              <Item><I n="flush" />平齐板顶</Item>
              <Item><I n="brush" />图元属性刷</Item>
            </Col>
            <Col $w={91}>
              <Item><I n="equip" />设备连管</Item>
              <Item><I n="gen" />生成立管<Caret $ml={7} /></Item>
              <Item><I n="deduct" />扣立管</Item>
            </Col>
            <Col $w={30} $pt={26}>
              <Item><Dots>...</Dots><Caret $ml={6} /></Item>
            </Col>
          </GroupBody>
          <GroupFoot>编辑图元</GroupFoot>
        </Group>

        <Mini $w={29}>
          <MiniBox $w={27} $flat>
            <S w={16} h={20}><path d="M2 2h12v3H7l5 5-5 5h7v3H2v-2l6-6-6-6z" fill="#1c88c8" /></S>
          </MiniBox>
          <MiniLabel $mt={11}>查量</MiniLabel>
          <Caret $block />
        </Mini>
        <Mini $w={55} $ml={-3}>
          <MiniBox $w={37}><I n="modCad" /></MiniBox>
          <MiniLabel $mt={7}><span>修改CAD</span></MiniLabel>
          <Caret $block />
        </Mini>
        <Mini $w={42} $ml={-3}>
          <MiniBox $w={37}><I n="helper" /></MiniBox>
          <MiniLabel $mt={7}>小助手</MiniLabel>
          <Caret $block />
        </Mini>
      </Ribbon>
      <Strip />

      <Main>
        <LeftCol>
          <Head t="定义" mt={1} />
          <Panes>
            <Pane $w={153}>
              <Combo>首层<ChevronDown size={13} strokeWidth={2.4} color="#444" /></Combo>
              <AddBar>
                <AddBtn $w={22}><S w={16} h={16}><path d="M4 1v8M0 5h8M11 7v8M7 11h8" stroke="#1f8fd8" strokeWidth="2" /></S></AddBtn>
                <AddBtn $w={22}><S w={16} h={16}><path d="M1 5h7M8 11h7" stroke="#1f8fd8" strokeWidth="2" /></S></AddBtn>
                <AddBtn $w={57}>编辑专业</AddBtn>
              </AddBar>
              <TreeWrap>
                <TreeBody $pt={1}>
                  <TreeRow $pl={14} $gap={4}><TriOpen /><Folder open /><span>通风空调</span></TreeRow>
                  <Branch $ml={12}>
                    {defTree.map(([k, t, sel], i) => (
                      <TreeRow key={i} $pl={17} $gap={5} $sel={sel}><S>{treeIcon[k]}</S><span><Mixed t={t} /></span></TreeRow>
                    ))}
                  </Branch>
                  <TreeRow $pl={15} $gap={4}><TriClosed /><Folder /><span>建筑结构</span></TreeRow>
                  <TreeRow $pl={15} $gap={4}><TriClosed /><Folder /><span>自定义</span></TreeRow>
                </TreeBody>
                <VBar $w={16}>
                  <Scroll.Up />
                  <VSpace $h={2} />
                  <VThumb $h={125} />
                  <VSpace />
                  <Scroll.Down />
                </VBar>
              </TreeWrap>
              <HBar $h={16}>
                <Scroll.Left />
                <HThumb $w={91} />
                <Grow />
                <Scroll.Right />
                <HCorner />
              </HBar>
            </Pane>
            <Pane $w={233}>
              <ToolStrip>
                <S w={20} h={20}>
                  <path d="M4 1v8M0 5h8" stroke="#e0c040" strokeWidth="3" />
                  <rect x="7" y="9" width="12" height="9" fill="#fff" stroke="#6a88a8" />
                  <path d="M7 12h12M7 15h12M11 9v9M15 9v9" stroke="#9fb8d5" />
                </S>
                <ToolBtn $w={42} $ml={1}>新建<ToolCaret /></ToolBtn>
                <ToolBtn $w={22}><S><path d="M3 3l10 10M13 3L3 13" stroke="#888" strokeWidth="1.3" /></S></ToolBtn>
                <ToolBtn $w={23}><S><rect x="1" y="1" width="9" height="11" fill="#cfe0f4" stroke="#7f9fc5" /><rect x="6" y="5" width="9" height="10" fill="#e6f0fb" stroke="#7f9fc5" /></S></ToolBtn>
                <ToolBtn $w={35}>
                  <S w={20} h={16}><path d="M5 1v14" stroke="#d66" /><path d="M3 3h5M3 13h5" stroke="#4a86c8" /><path d="M12 2v12M10 12l2 3 2-3" stroke="#444" fill="none" /></S>
                  <ToolCaret />
                </ToolBtn>
                <ToolBtn $w={33}>
                  <S w={18} h={16}><path d="M1 2h15l-6 6v7l-3-2V8z" fill="#7fb0e6" stroke="#3f7fc4" /></S>
                  <ToolCaret />
                </ToolBtn>
                <ToolBtn $w={30}>
                  <S w={18} h={16}><rect x="2" y="5" width="6" height="9" fill="#6b86a5" /><rect x="10" y="5" width="6" height="9" fill="#6b86a5" /><rect x="3" y="2" width="4" height="4" fill="#8ba3be" /><rect x="11" y="2" width="4" height="4" fill="#8ba3be" /><rect x="7" y="6" width="4" height="3" fill="#4a607a" /></S>
                  <ToolCaret />
                </ToolBtn>
                <More>»<ToolCaret /></More>
              </ToolStrip>
              <TreeWrap>
                <TreeBody $pt={2}>
                  <Branch $ml={21}>
                    {smokeRows.map((t, i) => <TreeRow key={i} $pl={18} $gap={7}><Gear /><span><Mixed t={t} /></span></TreeRow>)}
                  </Branch>
                  <TreeRow $pl={19} $gap={4}><TriOpen /><Doc /><DocName>新风系统</DocName></TreeRow>
                  <Branch $ml={32}>
                    {freshRows.map((t, i) => <TreeRow key={i} $pl={8} $gap={6}><Gear /><span><Mixed t={t} /></span></TreeRow>)}
                  </Branch>
                </TreeBody>
                <VBar $w={16}>
                  <Scroll.Up />
                  <VSpace $h={77} />
                  <VThumb $h={52} />
                  <VSpace />
                  <Scroll.Down />
                </VBar>
              </TreeWrap>
            </Pane>
          </Panes>
          <Head t="属性编辑器" mt={6} />
          <PropWrap>
            <PropClip>
              <PropTable>
                <thead>
                  <tr>
                    <PH $w={21} /><PH $w={91}>属性名称</PH><PH $w={229} $hot>属性值</PH><PH $w={31}>附加</PH>
                  </tr>
                </thead>
                <tbody>
                  {propRows.map((r, i) => (
                    <tr key={i}>
                      <Num $on={i === 0}><Lat>{i + 1}</Lat></Num>
                      <PName $blue={r.blue} $on={i === 0}><Mixed t={r.n} /></PName>
                      <PVal $on={i === 0} $gray={r.gray}><Mixed t={r.v} /></PVal>
                      <PChk>{i > 0 && <Check />}</PChk>
                    </tr>
                  ))}
                  <tr>
                    <Num><Lat>13</Lat></Num>
                    <PName $gray><PlusBox>+</PlusBox>计算</PName>
                    <PVal />
                    <PChk />
                  </tr>
                </tbody>
              </PropTable>
            </PropClip>
            <VBar $w={19}>
              <Scroll.Up />
              <VSpace $h={1} />
              <VThumb $h={78} />
              <VSpace />
              <Scroll.Down />
            </VBar>
          </PropWrap>
          <Foot />
        </LeftCol>

        <RightCol>
          <Cad />
          <SnapBar>
            <SnapSec $w={502}>
              <GripV $mr={5} />
              <SnapBtn $w={29}>正交</SnapBtn>
              <SnapBtn $w={58} $on>对象捕捉</SnapBtn>
              <SnapBtn $w={70}>CAD图灰显</SnapBtn>
              <SnapBtn $w={60}>动态输入</SnapBtn>
              <GripV $mr={8} $ml={8} />
              <SnapIcon $w={51}>
                <S><path d="M2 2l6 6 6-6M2 14l6-6 6 6" stroke="#3c78c0" strokeWidth="1.4" fill="none" /></S>交点
              </SnapIcon>
              <SnapIcon $w={52}>
                <S><path d="M0 12h16M11 4v12" stroke="#3c78c0" strokeWidth="1.2" /></S>垂点
              </SnapIcon>
              <SnapIcon $w={50}>
                <S><path d="M0 8h16" stroke="#3c78c0" /><rect x="6" y="6" width="5" height="4" fill="#2a5a9a" /></S>中点
              </SnapIcon>
              <SnapIcon $w={52}>
                <S><path d="M8 1l7 5-3 9H4L1 6z" fill="#fff" stroke="#3c78c0" /></S>顶点
              </SnapIcon>
              <SnapIcon $w={44}>
                <S><path d="M2 3v12h13M2 12l6-5 3 3 4-7" stroke="#3c78c0" fill="none" strokeDasharray="2 1" /></S>坐标
              </SnapIcon>
            </SnapSec>
            <SnapSec $w={308} $dark><GripV $mr={2} /></SnapSec>
          </SnapBar>
          <Bottom>
            <BottomGrip>
              <S w={12} h={12}>
                <rect x="1" y="1" width="10" height="10" fill="#c5ccd5" stroke="#667" />
                <path d="M2 2l8 8M10 2l-8 8" stroke="#555" />
              </S>
            </BottomGrip>
            <BottomMain>
              <BlueBar><ExportBtn><span>导出当前表内容到<ExportLatin>Excel</ExportLatin></span></ExportBtn></BlueBar>
              <GridZone>
                <GridClip>
                  <Grid>
                    <thead>
                      <tr>{gridCols.map(([t, w, hot]) => <GH key={t} $w={w} $hot={hot}><Mixed t={t} /></GH>)}</tr>
                    </thead>
                    <tbody>
                      {gridRows.map((r, i) => (
                        <tr key={i}>
                          {r.c.slice(0, 5).map((v, j) => (
                            <GD key={j} $sel={i === 0 && j === 1}><CellBox $h={r.h}><Mixed t={v} /></CellBox></GD>
                          ))}
                          <GD $left><CellBox $h={r.h}>{r.f.map((l, k) => <Line key={k}><Mixed t={l} /></Line>)}</CellBox></GD>
                          {r.c.slice(5).map((v, j) => <GD key={j}><CellBox $h={r.h}><Mixed t={v} /></CellBox></GD>)}
                        </tr>
                      ))}
                    </tbody>
                  </Grid>
                </GridClip>
                <VBar $w={10}>
                  <Scroll.Up />
                  <VSpace $h={8} />
                  <VThumb $h={30} />
                  <VSpace />
                  <Scroll.Down />
                </VBar>
              </GridZone>
              <HBar $h={17}>
                <Scroll.Left />
                <HThumb $w={613} />
                <Grow />
                <Scroll.Right />
              </HBar>
              <Foot />
            </BottomMain>
          </Bottom>
        </RightCol>
      </Main>

      <Sogou>
        <SogouBar>
          <SogouChar $w={30}>中</SogouChar>
          <SogouChar $w={17}>°,</SogouChar>
          <SogouIcon $w={24}><Smile size={17} /></SogouIcon>
          <SogouIcon $w={20}><Mic size={17} /></SogouIcon>
          <SogouIcon $w={24}><Keyboard size={18} /></SogouIcon>
          <SogouIcon $w={24} $muted><User size={16} fill="#a9bccd" /></SogouIcon>
          <SogouIcon $w={16}><Shirt size={16} fill="#1a80d8" /></SogouIcon>
          <SogouIcon $w={22}><Wrench size={16} /></SogouIcon>
        </SogouBar>
        <S w={26} h={26}>
          <rect x="1" y="2" width="23" height="22" rx="3" fill="#f4531c" transform="rotate(-8 13 13)" />
          <path d="M18 9c-2-2-9-2-10 1s8 3 9 6-6 4-10 2" stroke="#fff" strokeWidth="3" fill="none" />
        </S>
      </Sogou>
    </Page>
  );
}
